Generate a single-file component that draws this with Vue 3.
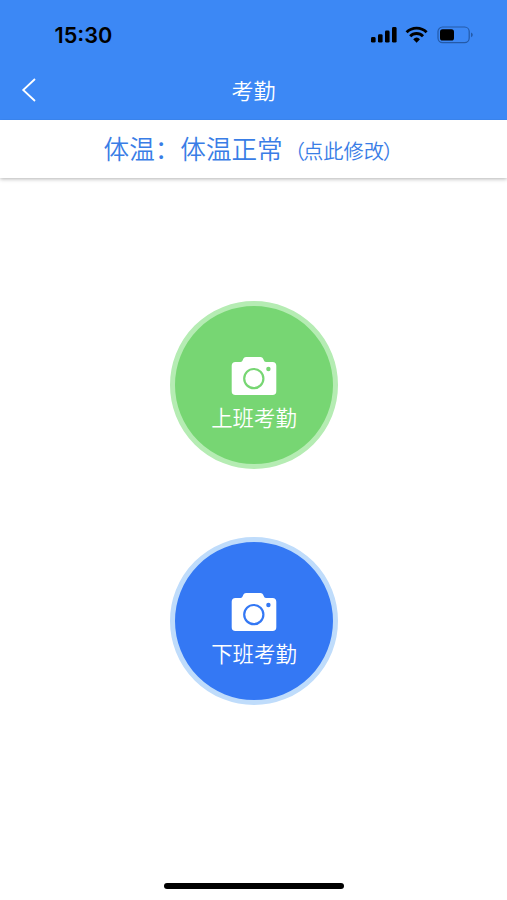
<script setup>
const actions = [
  { label: '上班考勤', kind: 'clock-in' },
  { label: '下班考勤', kind: 'clock-out' },
]
</script>

<template>
  <div class="screen">
    <header class="header">
      <div class="status">
        <span class="time">15:30</span>
        <svg class="indicators" width="104" height="20" viewBox="0 0 104 20">
          <rect x="1" y="12" width="4.6" height="5.6" rx="1.4" />
          <rect x="8" y="9.2" width="4.6" height="8.4" rx="1.4" />
          <rect x="15" y="5.6" width="4.6" height="12" rx="1.4" />
          <rect x="22" y="2" width="4.6" height="15.6" rx="1.4" />
          <g fill="none" stroke="#000" stroke-width="2.9">
            <path d="M36.6 7.2a14.2 14.2 0 0 1 20 0" />
            <path d="M40.2 11.2a9 9 0 0 1 12.8 0" />
          </g>
          <path d="M43.2 14.2a5 5 0 0 1 6.8 0L46.6 17.8z" />
          <rect x="68" y="2" width="31.2" height="15.6" rx="4.6" fill="none" stroke="#245aa8" stroke-width="1.2" />
          <rect x="70" y="4.2" width="14" height="11.4" rx="2.6" />
          <path d="M101 7.4q1.8.8 1.8 2.4t-1.8 2.4z" fill="#245aa8" />
        </svg>
      </div>
      <nav class="nav">
        <svg class="back" width="16" height="26" viewBox="0 0 16 26">
          <path d="M14 2L2.2 13 14 24" fill="none" stroke="#fff" stroke-width="1.8" />
        </svg>
        <h1 class="title">考勤</h1>
      </nav>
    </header>
    <div class="temperature">体温：体温正常<span class="edit"><span class="open">（</span>点此修改<span class="close">）</span></span></div>
    <main class="actions">
      <button v-for="a in actions" :key="a.kind" class="punch" :class="a.kind">
        <svg class="camera" width="46" height="40" viewBox="0 0 46 40">
          <path fill="#fff" d="M4.5 6H9.5Q11.3 6 11.8 4L12.3 2.7Q13 1 15 1H29.5Q31.5 1 32.2 2.7L32.7 4Q33.2 6 35 6H41.5Q45.3 6 45.3 9.8V35.2Q45.3 39 41.5 39H4.5Q.7 39 .7 35.2V9.8Q.7 6 4.5 6Z" />
          <circle class="lens" cx="22.8" cy="22.6" r="9.6" />
          <circle class="dot" cx="37.4" cy="13" r="2.2" />
        </svg>
        <span class="label">{{ a.label }}</span>
      </button>
    </main>
    <footer class="home"><div class="home-bar"></div></footer>
  </div>
</template>

<style>
body {
  background: #fff;
}
</style>

<style scoped>
.screen {
  display: flex;
  flex-direction: column;
  height: 900px;
  overflow: hidden;
  font-family: "Noto Sans CJK SC", sans-serif;
}
.header {
  height: 119.5px;
  flex: none;
  background: #3c88f5;
}
.status {
  display: flex;
  justify-content: space-between;
  align-items: center;
  height: 69px;
  padding: 0 33px 0 54.5px;
  box-sizing: border-box;
}
.time {
  font: 600 21.7px/30px Inter, sans-serif;
  color: #000;
}
.nav {
  display: grid;
  grid-template-columns: 60px 1fr 60px;
  align-items: center;
  height: 42px;
}
.back {
  margin-left: 21px;
}
.title {
  margin: -3px 0 0;
  text-align: center;
  font-size: 22px;
  line-height: 32px;
  font-weight: 350;
  color: #fff;
}
.temperature {
  flex: none;
  height: 58px;
  padding-left: 1px;
  line-height: 56px;
  text-align: center;
  white-space: nowrap;
  font-size: 25.6px;
  font-weight: 350;
  color: #397de6;
  box-shadow: 0 1px 4px rgba(0, 0, 0, 0.3);
  clip-path: inset(0 0 -8px 0);
}
.edit {
  font-size: 20.3px;
}
.open {
  margin: 0 -2px 0 2px;
}
.close {
  margin: 0 1.5px 0 -1.5px;
}
.actions {
  flex: 1;
  display: flex;
  flex-direction: column;
  align-items: center;
  gap: 68px;
  padding: 123px 0 0 1px;
}
.punch {
  display: flex;
  flex-direction: column;
  align-items: center;
  width: 168px;
  height: 168px;
  padding: 50px 0 0;
  box-sizing: border-box;
  border: 5px solid;
  border-radius: 50%;
  color: #fff;
  font-family: inherit;
}
.clock-in {
  --fill: #77d673;
  background: #77d673;
  border-color: #b5ecb3;
}
.clock-out {
  --fill: #3478f4;
  background: #3478f4;
  border-color: #bfdcfb;
}
.camera {
  flex: none;
}
.lens {
  fill: none;
  stroke: var(--fill);
  stroke-width: 2.2;
}
.dot {
  fill: var(--fill);
}
.label {
  margin-top: 5px;
  font-size: 21.4px;
  line-height: 32px;
  font-weight: 350;
}
.home {
  flex: none;
  display: flex;
  justify-content: center;
  height: 17px;
}
.home-bar {
  width: 180px;
  height: 6px;
  border-radius: 3px;
  background: #000;
}
</style>
